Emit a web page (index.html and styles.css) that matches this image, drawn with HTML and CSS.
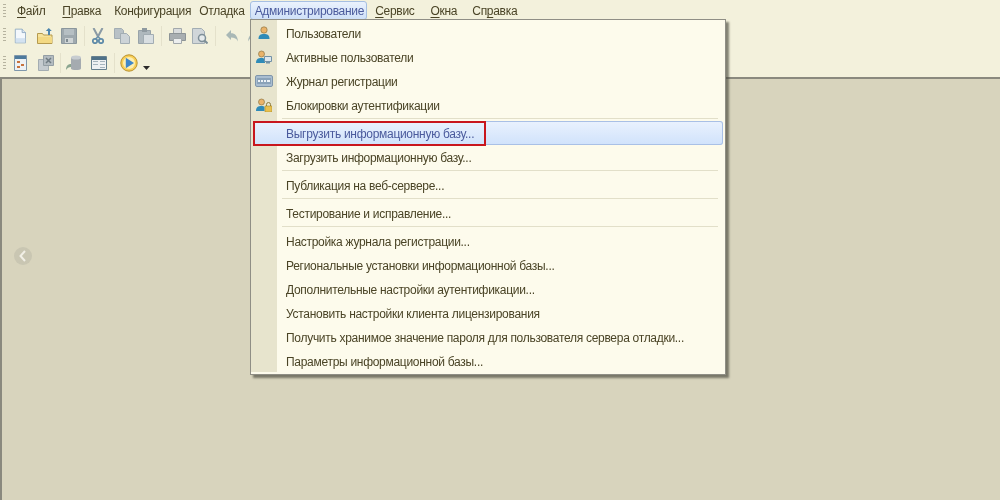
FILE: index.html
```html
<!DOCTYPE html>
<html lang="ru">
<head>
<meta charset="utf-8">
<title>1С</title>
<link rel="stylesheet" href="styles.css">
</head>
<body>
<div class="app">
  <header class="chrome">
    <nav class="menubar">
      <span class="grip grip-menu"></span>
      <span class="mi m-file"><u>Ф</u>айл</span>
      <span class="mi m-edit"><u>П</u>равка</span>
      <span class="mi m-conf">Конфигурация</span>
      <span class="mi m-debug">Отладка</span>
      <span class="mi m-admin">Администрирование</span>
      <span class="mi m-serv"><u>С</u>ервис</span>
      <span class="mi m-win"><u>О</u>кна</span>
      <span class="mi m-help">Сп<u>р</u>авка</span>
    </nav>
    <div class="toolbar tb1">
      <span class="grip"></span>
      <svg class="ic w14" viewBox="0 0 14 17"><path d="M1.500.500h8l4 4v12h-12z" fill="#f4f8fc" stroke="#8ba6c0"/><path d="M2 11h11v5H2z" fill="#d3e2f1"/><path d="M9.500.500v4h4" fill="#dfe9f3" stroke="#8ba6c0"/></svg>
      <svg class="ic w16 ml11" viewBox="0 0 16 16"><path d="M.5 5.500h5l1 1.500h8.500v8.500H.5z" fill="#f6e39b" stroke="#b59a4f"/><path d="M1 9h14v6H1z" fill="#f3d983"/><path d="M11 7V3H8.800l3-3 3 3H13v4z" fill="#4d85ad"/></svg>
      <svg class="ic w16 ml8" viewBox="0 0 16 16"><path d="M.5.500h15v15H.500z" fill="#9fa9ae" stroke="#8b979d"/><path d="M3 1h10v6H3z" fill="#b6bfc3"/><path d="M4 10h8v5H4z" fill="#cfd4d5"/><path d="M5 11h2v3H5z" fill="#7f8b91"/></svg>
      <i class="sep s1"></i>
      <svg class="ic w12 ml7" viewBox="0 0 12 16"><path d="M1.500 0L6 8.500 10.500 0" stroke="#8a9aa5" stroke-width="2" fill="none"/><path d="M6 8.500L3.500 11M6 8.500L8.500 11" stroke="#6f93ab" stroke-width="1.500"/><circle cx="3" cy="13" r="2.200" fill="none" stroke="#5f8ba9" stroke-width="1.800"/><circle cx="9" cy="13" r="2.200" fill="none" stroke="#5f8ba9" stroke-width="1.800"/></svg>
      <svg class="ic w16 ml10" viewBox="0 0 16 16"><path d="M.5.500h7l2 2v8H.500z" fill="#b8c1c6" stroke="#a2adb3"/><path d="M6.500 5.500h6l3 3v7h-9z" fill="#ccd3d7" stroke="#a2adb3"/></svg>
      <svg class="ic w16 ml8" viewBox="0 0 16 16"><path d="M.5 2.500h12v13H.500z" fill="#aeb8bd" stroke="#98a3a9"/><path d="M4 0h5v4H4z" fill="#8f9aa0"/><path d="M5.500 6.500h10v9h-10z" fill="#d8dee1" stroke="#a2adb3"/></svg>
      <i class="sep s2"></i>
      <svg class="ic w17 ml7" viewBox="0 0 17 16"><path d="M4.500.500h8v5h-8z" fill="#d9dcdd" stroke="#a2a8ab"/><path d="M.5 5.500h16v7H.500z" fill="#a8aeb1" stroke="#8d9497"/><path d="M4.500 10.500h8v5h-8z" fill="#eceeee" stroke="#a2a8ab"/></svg>
      <svg class="ic w16 ml6" viewBox="0 0 16 16"><path d="M.5.500h9l3 3v12H.500z" fill="#d0d6d9" stroke="#a2adb3"/><circle cx="10" cy="10" r="3.500" fill="#e5eaec" stroke="#7e8f98" stroke-width="1.500"/><path d="M12.500 12.500l3 3" stroke="#7e8f98" stroke-width="2"/></svg>
      <i class="sep s3"></i>
      <svg class="ic w12 ml10" viewBox="0 0 12 12"><path d="M0 5l5-5v3.200c4 0 6.500 2.500 7 8.300-1.500-3-3.500-4-7-4V10z" fill="#a9b8b6"/></svg>
      <svg class="ic w12 ml10" viewBox="0 0 12 12"><path d="M12 5L7 0v3.200C3 3.200.5 5.700 0 11.500c1.500-3 3.500-4 7-4V10z" fill="#a9b8b6"/></svg>
    </div>
    <div class="toolbar tb2">
      <span class="grip"></span>
      <svg class="ic w13" viewBox="0 0 13 16"><path d="M.5.500h12v15H.500z" fill="#eef2f5" stroke="#7f97ab"/><path d="M1 1h11v3H1z" fill="#4e7a9c"/><path d="M3 6h3v2H3zM7 9h3v2H7zM3 11h3v2H3z" fill="#c8733e"/></svg>
      <svg class="ic w16 ml11" viewBox="0 0 16 16"><path d="M.5 4.500h10v11H.500z" fill="#c5cbcf" stroke="#a4adb2"/><path d="M5.500.500h10v10h-10z" fill="#b3bbc0" stroke="#949ea4"/><path d="M8 3l5 5M13 3L8 8" stroke="#6f7b82" stroke-width="1.500"/></svg>
      <i class="sep s4"></i>
      <svg class="ic w17 ml5" viewBox="0 0 17 16"><path d="M0 15c0-4 2-6 5-6V7l4 3.500L5 14v-2c-2 0-4 1-5 3z" fill="#8aa58f"/><path d="M5 2.500v11c0 2 10 2 10 0v-11z" fill="#a5abb0"/><ellipse cx="10" cy="2.500" rx="5" ry="2" fill="#c7ccd0"/></svg>
      <svg class="ic w16 ml8" viewBox="0 0 16 14"><path d="M.5.500h15v13H.500z" fill="#eef1f3" stroke="#66808f"/><path d="M1 1h14v3H1z" fill="#4f7188"/><path d="M9 5h5v1H9zm0 3h5v1H9zm0 3h5v1H9zM2 5h5v1H2zm0 3h5v1H2z" fill="#a5b4bd"/></svg>
      <i class="sep s5"></i>
      <svg class="ic w18 ml5" viewBox="0 0 18 18"><circle cx="9" cy="9" r="8.200" fill="#f7ce55" stroke="#b9912f"/><circle cx="9" cy="9" r="6" fill="#fdeeb0"/><path d="M5.800 3.800l8.200 5.200-8.200 5.200z" fill="#3f86c9"/></svg>
      <svg class="ic drop" viewBox="0 0 7 4"><path d="M0 0h7L3.500 4z" fill="#2a2a2a"/></svg>
    </div>
  </header>

  <main class="workspace">
    <div class="pager"><svg viewBox="0 0 8 12"><path d="M6 1L1.500 6 6 11" fill="none" stroke="#f1efe6" stroke-width="2"/></svg></div>
  </main>

  <div class="admin-tab"></div>

  <section class="menu">
    <div class="row"><span class="gut"><svg class="g16" viewBox="0 0 14 14"><circle cx="7" cy="4" r="3.200" fill="#eab36a" stroke="#7d6a3a" stroke-width=".6"/><path d="M1.500 13c0-4 2-5 5.500-5s5.500 1 5.500 5z" fill="#2f8bb8"/></svg></span><span class="lb">Пользователи</span></div>
    <div class="row"><span class="gut"><svg class="g16" viewBox="0 0 16 14"><circle cx="5.500" cy="4" r="3" fill="#eab36a" stroke="#7d6a3a" stroke-width=".6"/><path d="M0 13c0-4 2-5 5.500-5 2 0 3 .5 3.500 1.500V13z" fill="#2f8bb8"/><path d="M8.500 6.500h7v5h-7z" fill="#dce7ee" stroke="#7291a6"/><path d="M10 12h4v1.500h-4z" fill="#7291a6"/></svg></span><span class="lb">Активные пользователи</span></div>
    <div class="row"><span class="gut"><svg class="g18" viewBox="0 0 18 12"><rect x=".5" y=".5" width="17" height="11" rx="1.500" fill="#a9bdd0" stroke="#7f95aa"/><path d="M2 3h14v6H2z" fill="#8aa2b9"/><path d="M3 5h2v2H3zm3 0h2v2H6zm3 0h2v2H9zm3 0h3v2h-3z" fill="#eef3f7"/></svg></span><span class="lb">Журнал регистрации</span></div>
    <div class="row"><span class="gut"><svg class="g16" viewBox="0 0 16 14"><circle cx="5.500" cy="4" r="3" fill="#eab36a" stroke="#7d6a3a" stroke-width=".6"/><path d="M0 13c0-4 2-5 5.500-5 1.500 0 2.500.3 3 1v4z" fill="#2f8bb8"/><path d="M10.500 8V6.500a2 2 0 0 1 4 0V8" fill="none" stroke="#8c7a3c"/><path d="M9 8h7v6H9z" fill="#e8c04f" stroke="#a88a2d" stroke-width=".6"/></svg></span><span class="lb">Блокировки аутентификации</span></div>
    <div class="line"></div>
    <div class="row hot"><span class="gut"></span><span class="lb">Выгрузить информационную базу...</span><span class="redbox"></span></div>
    <div class="row"><span class="gut"></span><span class="lb">Загрузить информационную базу...</span></div>
    <div class="line"></div>
    <div class="row"><span class="gut"></span><span class="lb">Публикация на веб-сервере...</span></div>
    <div class="line"></div>
    <div class="row"><span class="gut"></span><span class="lb">Тестирование и исправление...</span></div>
    <div class="line"></div>
    <div class="row"><span class="gut"></span><span class="lb">Настройка журнала регистрации...</span></div>
    <div class="row"><span class="gut"></span><span class="lb">Региональные установки информационной базы...</span></div>
    <div class="row"><span class="gut"></span><span class="lb">Дополнительные настройки аутентификации...</span></div>
    <div class="row"><span class="gut"></span><span class="lb">Установить настройки клиента лицензирования</span></div>
    <div class="row"><span class="gut"></span><span class="lb">Получить хранимое значение пароля для пользователя сервера отладки...</span></div>
    <div class="row"><span class="gut"></span><span class="lb">Параметры информационной базы...</span></div>
  </section>
</div>
</body>
</html>
```
FILE: styles.css
```css
* { box-sizing: border-box; }
html, body { margin: 0; height: 100%; overflow: hidden; }
body { font-family: "Liberation Sans", Arial, sans-serif; font-size: 12px; letter-spacing: -.29px; color: #4a4426; }
.app { position: relative; width: 1000px; height: 500px; display: flex; flex-direction: column; background: #d8d4bd; }
.chrome { height: 77px; background: #f3f1dc; flex: none; }
.menubar { height: 22px; display: flex; align-items: center; padding-left: 3px; }
.mi { line-height: 22px; white-space: nowrap; filter: blur(.35px); }
.mi u { text-decoration-thickness: 1px; text-underline-offset: 2px; }
.m-file { margin-left: 11px; }
.m-edit { margin-left: 17px; }
.m-conf { margin-left: 13px; }
.m-debug { margin-left: 8px; }
.m-admin { margin-left: 10px; color: #4a5a9c; position: relative; z-index: 2; }
.m-serv { margin-left: 11px; }
.m-win { margin-left: 16px; }
.m-help { margin-left: 15px; }
.grip { width: 3px; height: 15px; flex: none; background-image: repeating-linear-gradient(#b6b39f 0 1px, transparent 1px 3px); }
.toolbar { display: flex; align-items: center; padding-left: 3px; height: 28px; }
.tb1 { height: 27px; }
.tb1 .ic:first-of-type, .tb2 .ic:first-of-type { margin-left: 8px; }
.ic { flex: none; display: block; filter: blur(.45px); }
.w12 { width: 12px; height: 16px; }
.w13 { width: 13px; height: 16px; }
.w14 { width: 12px; height: 16px; }
.w16 { width: 16px; height: 16px; }
.w17 { width: 17px; height: 16px; }
.w18 { width: 18px; height: 18px; }
.ml5 { margin-left: 5px; }
.ml6 { margin-left: 6px; }
.ml7 { margin-left: 7px; }
.ml8 { margin-left: 8px; }
.ml10 { margin-left: 10px; }
.ml11 { margin-left: 11px; }
.sep { flex: none; width: 1px; height: 20px; background: #e4e1cb; }
.s1, .s2, .s3, .s5 { margin-left: 7px; }
.s4 { margin-left: 6px; }
.drop { width: 7px; height: 4px; margin: 10px 0 0 5px; }
.workspace { flex: 1; border-top: 2px solid #8a897e; border-left: 2px solid #8a897e; padding: 168px 0 0 12px; }
.pager { width: 18px; height: 18px; border-radius: 50%; background: #c9c6b2; display: flex; align-items: center; justify-content: center; }
.pager svg { width: 8px; height: 12px; }
.admin-tab { position: absolute; left: 250px; top: 1px; width: 117px; height: 19px; border: 1px solid #a6bfe2; border-radius: 3px; background: linear-gradient(#eaf2fd, #cfe0f8); z-index: 1; }
.menu { position: absolute; z-index: 3; left: 250px; top: 19px; width: 476px; height: 356px; background: linear-gradient(#e7e4cd, #e7e4cd) 0 0 / 26px 352px no-repeat, #fdfbec; border: 1px solid #8f8e85; padding-top: 1px; box-shadow: 3px 3px 2px rgba(70, 70, 60, .65); display: flex; flex-direction: column; }
.row { position: relative; height: 24px; display: flex; align-items: center; flex: none; }
.gut { width: 26px; height: 24px; display: flex; align-items: center; justify-content: center; flex: none; }
.g16 { width: 16px; height: 14px; filter: blur(.3px); }
.g18 { width: 18px; height: 12px; filter: blur(.3px); }
.lb { margin-left: 9px; margin-top: 1px; white-space: nowrap; line-height: 24px; filter: blur(.35px); }
.line { height: 4px; flex: none; background: linear-gradient(#e2dfc9, #e2dfc9) 31px 1px / 436px 1px no-repeat; }
.hot { background: linear-gradient(#eaf2fe, #d0e2fb); box-shadow: inset 0 0 0 1px #a9c0e6; border-radius: 3px; margin: 0 2px; color: #4a5a9c; }
.hot .gut { width: 24px; }
.redbox { position: absolute; left: 0; top: 0; width: 233px; height: 25px; border: 2px solid #c8161d; }
```
